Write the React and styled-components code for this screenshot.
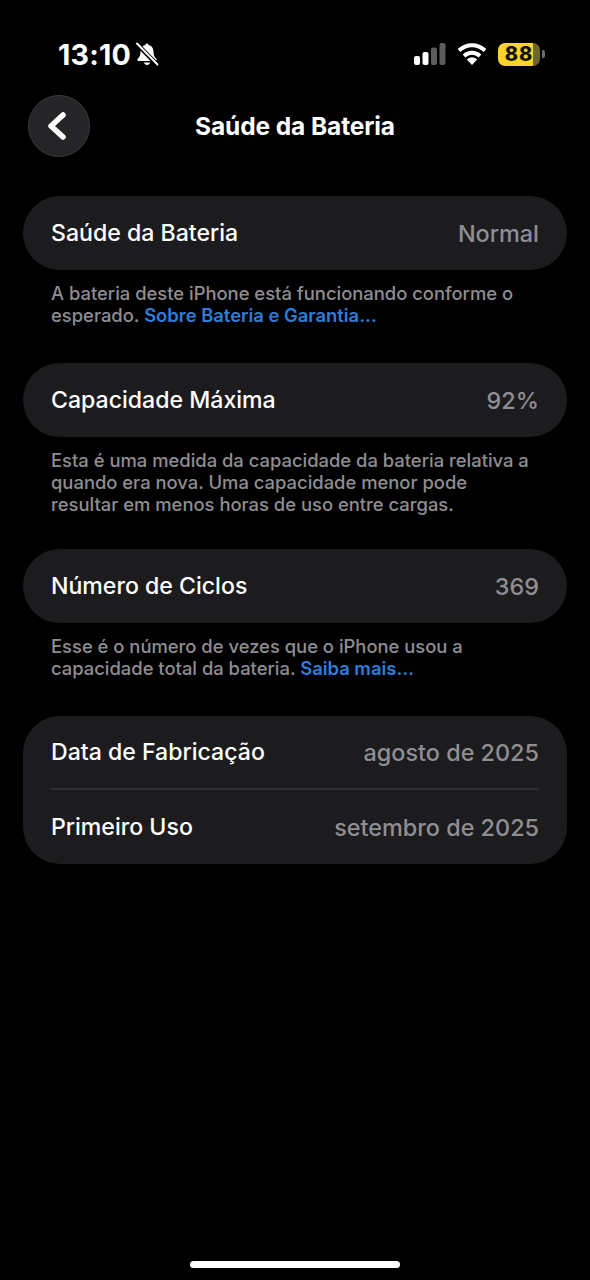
import styled, { createGlobalStyle } from "styled-components";

const Global = createGlobalStyle`
  html, body {
    margin: 0;
    background: #000000;
  }
  * {
    box-sizing: border-box;
  }
`;

const Screen = styled.main`
  width: 590px;
  height: 1280px;
  background: #000000;
  color: #ffffff;
  font-family: Inter, "Liberation Sans", sans-serif;
  display: flex;
  flex-direction: column;
  overflow: hidden;
`;

const StatusBar = styled.div`
  height: 95px;
  padding: 36px 45px 0 58px;
  display: flex;
  justify-content: space-between;
  align-items: flex-start;
`;

const Clock = styled.div`
  display: flex;
  align-items: center;
  gap: 3px;
  height: 36px;
  font-size: 28.600px;
  font-weight: 700;
  letter-spacing: 0.2px;
`;

const Indicators = styled.div`
  display: flex;
  align-items: center;
  height: 36px;
  gap: 11px;
`;

const Battery = styled.div`
  display: flex;
  align-items: center;
  gap: 2px;
`;

const BatteryBody = styled.div`
  width: 42px;
  height: 23px;
  border-radius: 7px;
  background: linear-gradient(90deg, #fbd428 0 84%, #6e6632 84%);
  color: #111111;
  font-size: 20px;
  font-weight: 800;
  display: flex;
  align-items: center;
  justify-content: center;
  letter-spacing: 1px;
`;

const BatteryCap = styled.div`
  width: 3px;
  height: 8px;
  border-radius: 0 2px 2px 0;
  background: #6b6b6b;
`;

const Header = styled.header`
  display: grid;
  grid-template-columns: 62px 1fr 62px;
  align-items: center;
  padding: 0 28px;
  height: 62px;
`;

const BackButton = styled.button`
  width: 62px;
  height: 62px;
  border-radius: 50%;
  border: 1px solid #3a3a3c;
  background: #252527;
  padding: 0;
  display: flex;
  align-items: center;
  justify-content: center;
`;

const Title = styled.h1`
  margin: 0;
  font-size: 24.500px;
  font-weight: 700;
  text-align: center;
  letter-spacing: -0.1px;
`;

const Content = styled.div`
  padding: 39px 23px 0;
  display: flex;
  flex-direction: column;
`;

const Card = styled.section`
  background: #1c1c1e;
  border-radius: 37px;
  padding: 0 28px;
`;

const Row = styled.div`
  height: 74px;
  display: flex;
  align-items: center;
  justify-content: space-between;
  font-size: 23.100px;
  font-weight: 500;
  &:not(:last-child) {
    border-bottom: 2px solid #313133;
  }
`;

const Value = styled.span`
  color: #8e8e93;
  font-size: 23.400px;
`;

const Note = styled.p`
  margin: 0;
  padding: 12px 28px 0;
  font-size: 18.400px;
  font-weight: 500;
  line-height: 22px;
  color: #8e8e92;
  margin-bottom: ${(p) => p.$after}px;
`;

const NoteLink = styled.span`
  color: #2f7ddb;
  font-weight: 600;
`;

const HomeBar = styled.div`
  width: 210px;
  height: 7px;
  border-radius: 4px;
  background: #ffffff;
  margin: auto auto 12px;
`;

function BellSlash() {
  return (
    <svg width="26" height="24" viewBox="0 0 26 24">
      <path
        fill="#fff"
        d="M13 1.500c-.9 0-1.500.6-1.600 1.500C8.300 3.700 6.600 6.200 6.500 9.500c-.1 3.500-.6 5-2.300 6.700-.6.6-.9 1.100-.9 1.600 0 .7.5 1.200 1.300 1.200h16.800c.8 0 1.300-.5 1.300-1.200 0-.5-.3-1-.9-1.600-1.700-1.700-2.200-3.200-2.300-6.700-.1-3.300-1.800-5.800-4.900-6.500-.1-.9-.7-1.500-1.600-1.500z"
      />
      <path fill="#fff" d="M10 20.500h6c-.2 1.500-1.400 2.500-3 2.500s-2.800-1-3-2.500z" />
      <path stroke="#000" strokeWidth="4.500" d="M3 2l20 20.500" />
      <path stroke="#fff" strokeWidth="1.900" strokeLinecap="round" d="M3 1.500l20.500 21" />
    </svg>
  );
}

function Signal() {
  return (
    <svg width="32" height="24" viewBox="0 0 32 24">
      <rect x="0" y="14" width="6" height="9" rx="2" fill="#fff" />
      <rect x="8.500" y="10" width="6" height="13" rx="2" fill="#fff" />
      <rect x="17" y="5.500" width="6" height="17.500" rx="2" fill="#5c5c5e" />
      <rect x="25.500" y="1" width="6" height="22" rx="2" fill="#5c5c5e" />
    </svg>
  );
}

function Wifi() {
  return (
    <svg width="30" height="24" viewBox="0 0 30 24" fill="none" stroke="#fff" strokeWidth="4">
      <path d="M2 8.500c7.500-7 18.500-7 26 0" />
      <path d="M7 14c4.800-4.300 11.200-4.300 16 0" />
      <path fill="#fff" stroke="none" d="M15 23l-5.200-5.600c3.200-2.500 7.200-2.500 10.400 0z" />
    </svg>
  );
}

function Chevron() {
  return (
    <svg width="24" height="34" viewBox="0 0 24 34" fill="none">
      <path
        d="M16 6L4 17l12 11"
        stroke="#fff"
        strokeWidth="5.500"
        strokeLinecap="round"
        strokeLinejoin="round"
      />
    </svg>
  );
}

export default function App() {
  return (
    <Screen>
      <Global />
      <StatusBar>
        <Clock>
          13:10
          <BellSlash />
        </Clock>
        <Indicators>
          <Signal />
          <Wifi />
          <Battery>
            <BatteryBody>88</BatteryBody>
            <BatteryCap />
          </Battery>
        </Indicators>
      </StatusBar>

      <Header>
        <BackButton aria-label="Voltar">
          <Chevron />
        </BackButton>
        <Title>Saúde da Bateria</Title>
      </Header>

      <Content>
        <Card>
          <Row>
            Saúde da Bateria
            <Value>Normal</Value>
          </Row>
        </Card>
        <Note $after={37}>
          A bateria deste iPhone está funcionando conforme o esperado.{" "}
          <NoteLink>Sobre Bateria e Garantia...</NoteLink>
        </Note>

        <Card>
          <Row>
            Capacidade Máxima
            <Value>92%</Value>
          </Row>
        </Card>
        <Note $after={34}>
          Esta é uma medida da capacidade da bateria relativa a quando era nova. Uma capacidade
          menor pode resultar em menos horas de uso entre cargas.
        </Note>

        <Card>
          <Row>
            Número de Ciclos
            <Value>369</Value>
          </Row>
        </Card>
        <Note $after={37}>
          Esse é o número de vezes que o iPhone usou a capacidade total da bateria.{" "}
          <NoteLink>Saiba mais...</NoteLink>
        </Note>

        <Card>
          <Row>
            Data de Fabricação
            <Value>agosto de 2025</Value>
          </Row>
          <Row>
            Primeiro Uso
            <Value>setembro de 2025</Value>
          </Row>
        </Card>
      </Content>

      <HomeBar />
    </Screen>
  );
}
